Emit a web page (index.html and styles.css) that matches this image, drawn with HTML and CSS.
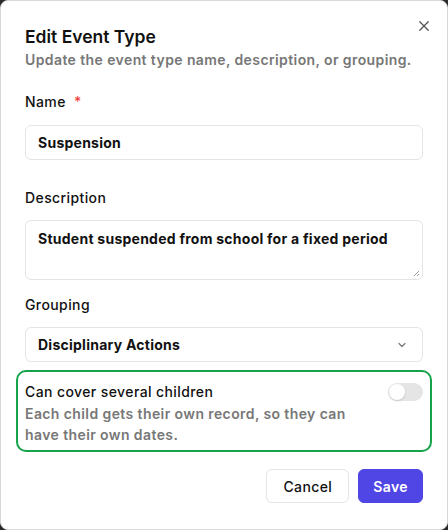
FILE: index.html
```html
<!DOCTYPE html>
<html>
<head>
<meta charset="utf-8">
<link rel="stylesheet" href="styles.css">
</head>
<body>
<div class="dialog">
  <button class="close" aria-label="Close">
    <svg width="12" height="12" viewBox="0 0 12 12"><path d="M1.8 1.8 L10.2 10.2 M10.2 1.8 L1.8 10.2" stroke="#555" stroke-width="1.3" stroke-linecap="round"/></svg>
  </button>
  <div class="header">
    <h2 class="title">Edit Event Type</h2>
    <p class="subtitle">Update the event type name, description, or grouping.</p>
  </div>
  <div class="field field-name">
    <label class="label">Name <span class="req">*</span></label>
    <div class="input">Suspension</div>
  </div>
  <div class="field field-desc">
    <label class="label">Description</label>
    <div class="textarea">Student suspended from school for a fixed period
      <svg class="grip" width="8" height="8" viewBox="0 0 8 8"><path d="M7 2 L2 7 M7 5 L5 7" stroke="#999" stroke-width="1"/></svg>
    </div>
  </div>
  <div class="field field-group">
    <label class="label">Grouping</label>
    <div class="select"><span>Disciplinary Actions</span>
      <svg width="12" height="12" viewBox="0 0 12 12"><path d="M3 4.5 L6 7.5 L9 4.5" fill="none" stroke="#777" stroke-width="1.2" stroke-linecap="round" stroke-linejoin="round"/></svg>
    </div>
  </div>
  <div class="option">
    <div class="option-top">
      <span class="option-title">Can cover several children</span>
      <span class="toggle"><span class="knob"></span></span>
    </div>
    <p class="option-desc">Each child gets their own record, so they can have their own dates.</p>
  </div>
  <div class="actions">
    <button class="btn cancel">Cancel</button>
    <button class="btn save">Save</button>
  </div>
</div>
</body>
</html>
```
FILE: styles.css
```css
* { box-sizing: border-box; }
html, body { margin: 0; padding: 0; }
body {
  background: #2a2a2a;
  font-family: "Inter", "DejaVu Sans", sans-serif;
  color: #111;
  letter-spacing: 0.4px;
}
.dialog {
  position: relative;
  width: 448px;
  height: 530px;
  background: #fff;
  border: 1px solid #d9d9d9;
  border-radius: 8px;
  padding: 24px 24px 0 24px;
}
.close {
  position: absolute;
  top: 18px;
  right: 16px;
  width: 14px;
  height: 14px;
  padding: 0;
  border: 0;
  background: none;
  display: flex;
  align-items: center;
  justify-content: center;
}
.header { margin-bottom: 22px; }
.title {
  margin: 0;
  font-size: 17.5px;
  font-weight: 600;
  line-height: 24px;
  letter-spacing: 0;
  color: #111;
}
.subtitle {
  margin: 1px 0 0;
  font-size: 14px;
  font-weight: 600;
  line-height: 20px;
  color: #777;
}
.label {
  display: block;
  font-size: 14px;
  font-weight: 500;
  line-height: 20px;
  color: #111;
}
.req { color: #ef4444; margin-left: 4px; }
.field-name { margin-bottom: 28px; }
.field-name .label { margin-bottom: 13px; }
.field-desc { margin-bottom: 15px; }
.field-desc .label { margin-bottom: 12px; }
.field-group { margin-bottom: 8px; }
.field-group .label { margin-bottom: 12px; }
.input, .select, .textarea {
  border: 1px solid #e4e4e4;
  border-radius: 6px;
  font-size: 14px;
  font-weight: 700;
  letter-spacing: 0.25px;
  color: #111;
  padding: 0 12px;
}
.input { height: 35px; line-height: 33px; }
.textarea {
  position: relative;
  height: 60px;
  padding-top: 8px;
  line-height: 20px;
}
.grip { position: absolute; right: 2px; bottom: 2px; }
.select {
  height: 35px;
  display: flex;
  align-items: center;
  justify-content: space-between;
  padding-right: 14px;
}
.option {
  margin: 0 -9px;
  border: 2px solid #16a34a;
  border-radius: 10px;
  padding: 9px 7px 5px 7px;
}
.option-top {
  display: flex;
  justify-content: space-between;
  align-items: center;
}
.option-title {
  font-size: 14px;
  font-weight: 500;
  line-height: 22px;
}
.toggle {
  width: 35px;
  height: 18px;
  border-radius: 9px;
  background: #e5e5e5;
  display: flex;
  align-items: center;
  padding: 1px;
}
.knob {
  width: 16px;
  height: 16px;
  border-radius: 50%;
  background: #fff;
  box-shadow: 0 1px 2px rgba(0,0,0,0.15);
}
.option-desc {
  margin: 0;
  max-width: 345px;
  font-size: 14px;
  font-weight: 600;
  line-height: 21px;
  color: #777;
}
.actions {
  display: flex;
  justify-content: flex-end;
  gap: 9px;
  margin-top: 17px;
}
.btn {
  height: 34px;
  border-radius: 6px;
  font-family: inherit;
  font-size: 14px;
  font-weight: 500;
  letter-spacing: 0.4px;
  padding: 0 16px;
}
.cancel { background: #fff; border: 1px solid #e4e4e4; color: #111; }
.save { background: #4f46e5; border: 1px solid #4f46e5; color: #fff; font-weight: 600; padding: 0 14px; }
```
